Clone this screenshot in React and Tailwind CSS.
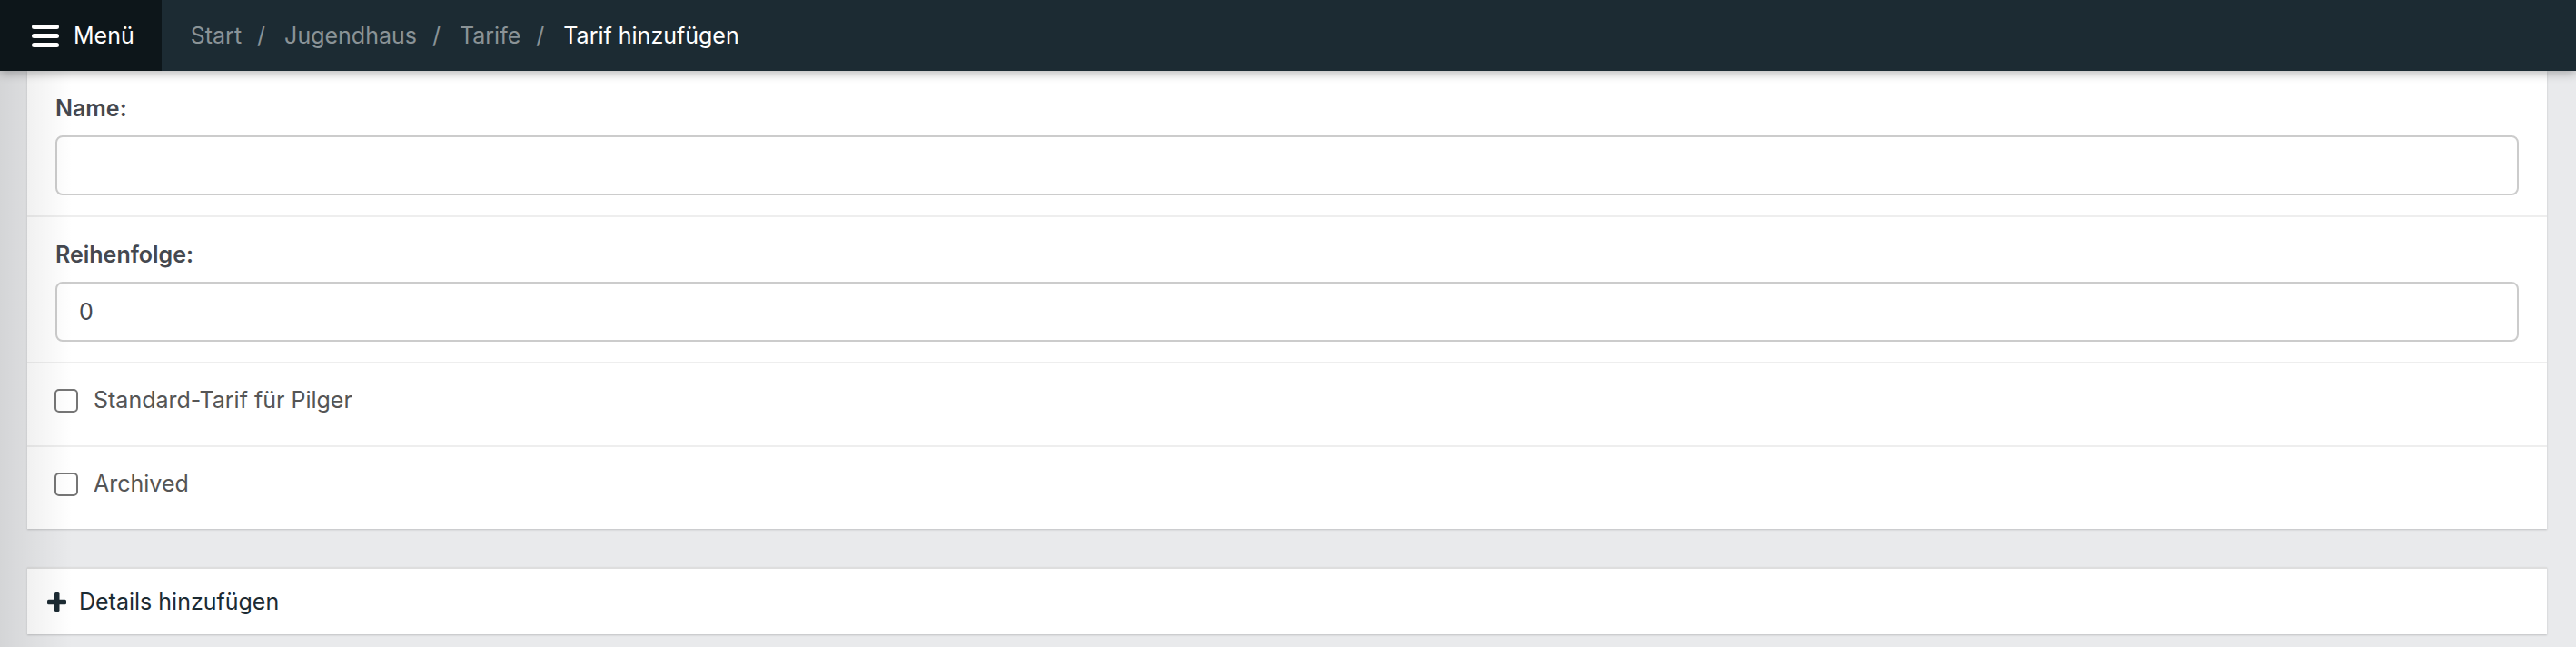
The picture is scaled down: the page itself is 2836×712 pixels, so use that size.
import React from 'react'

function BarsIcon() {
  return (
    <svg width="30" height="25" viewBox="0 0 30 25" className="shrink-0">
      <rect x="0" y="0" width="30" height="5" rx="2.5" fill="#ffffff" />
      <rect x="0" y="10" width="30" height="5" rx="2.5" fill="#ffffff" />
      <rect x="0" y="20" width="30" height="5" rx="2.5" fill="#ffffff" />
    </svg>
  )
}

function PlusIcon() {
  return (
    <svg width="21" height="21" viewBox="0 0 21 21" className="shrink-0">
      <rect x="8" y="0" width="5.5" height="21" rx="1.5" fill="#1c2b33" />
      <rect x="0" y="7.75" width="21" height="5.5" rx="1.5" fill="#1c2b33" />
    </svg>
  )
}

function Header() {
  const crumbs = ['Start', 'Jugendhaus', 'Tarife']
  return (
    <header className="relative z-10 flex h-[78px] bg-[#1c2b33] shadow-[0_3px_10px_rgba(0,0,0,0.28)]">
      <button className="flex items-center gap-[16px] bg-[#0d161a] pl-[35px] pr-[30px] text-[25px] leading-[39px] text-white">
        <BarsIcon />
        <span>Menü</span>
      </button>
      <nav className="flex items-center pl-[32px] text-[25px] leading-[39px]">
        {crumbs.map((c) => (
          <React.Fragment key={c}>
            <span className="text-[#8a9397]">{c}</span>
            <span className="pl-[17px] pr-[21px] text-[#8a9397]">/</span>
          </React.Fragment>
        ))}
        <span className="text-white">Tarif hinzufügen</span>
      </nav>
    </header>
  )
}

function TextField({ label, value }) {
  return (
    <div className="border-b-2 border-[#eeeeee] px-[31px] pt-[22px] pb-[22px]">
      <label className="mb-[10px] block text-[25px] font-semibold leading-[39px] text-[#45484f]">
        {label}
      </label>
      <input
        type="text"
        defaultValue={value}
        className="block h-[66px] w-full rounded-[8px] border-2 border-[#cccccc] bg-white px-[24px] text-[25px] text-[#45484f] outline-none"
      />
    </div>
  )
}

function CheckField({ label, last }) {
  return (
    <div className={`flex items-center gap-[17px] px-[30px] pt-[21px] pb-[30px] ${last ? '' : 'border-b-2 border-[#eeeeee]'}`}>
      <span className="h-[26px] w-[26px] shrink-0 rounded-[5px] border-2 border-[#767676] bg-white" />
      <span className="text-[25px] leading-[39px] text-[#555555]">{label}</span>
    </div>
  )
}

export default function App() {
  return (
    <div className="relative min-h-screen bg-[#e9eaec] font-['Inter',sans-serif]">
      <Header />
      <main className="flex flex-col gap-[42px] pl-[30px] pr-[32px]">
        <section className="bg-white shadow-[0_1px_2px_rgba(0,0,0,0.18)]">
          <TextField label="Name:" value="" />
          <TextField label="Reihenfolge:" value="0" />
          <CheckField label="Standard-Tarif für Pilger" />
          <CheckField label="Archived" last />
        </section>
        <section className="border-t-2 border-[#dedede] bg-white shadow-[0_1px_2px_rgba(0,0,0,0.18)]">
          <button className="flex items-center gap-[14px] px-[22px] pt-[17px] pb-[16px] text-[25px] leading-[39px] text-[#1c2b33]">
            <PlusIcon />
            <span>Details hinzufügen</span>
          </button>
        </section>
      </main>
      <div className="pointer-events-none absolute top-[78px] bottom-0 left-0 w-[80px] bg-[linear-gradient(to_right,rgba(0,0,0,0.09),rgba(0,0,0,0))]" />
    </div>
  )
}
